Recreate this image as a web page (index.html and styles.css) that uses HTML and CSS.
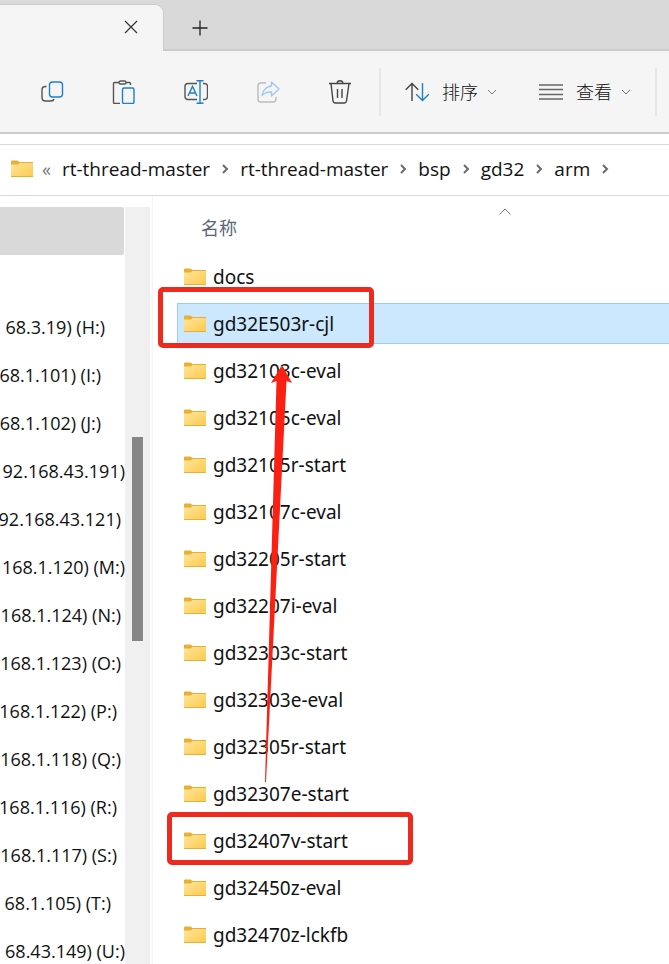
FILE: index.html
```
<!DOCTYPE html>
<html lang="zh-CN">
  <head>
    <meta charset="utf-8">
    <title>arm</title>
    <link rel="stylesheet" href="styles.css">
  </head>
  <body>
    <svg class="defs" width="0" height="0">
      <defs>
        <linearGradient id="fold" x1="0" y1="0" x2="1" y2="1">
          <stop offset="0" stop-color="#ffe59b"/>
          <stop offset="1" stop-color="#fcca4c"/>
        </linearGradient>
        <symbol id="folder" viewBox="0 0 22 18">
          <path d="M0 1.5Q0 .5 1 .5h5.5L8.5 2H22v6H0z" fill="#e8b030"/>
          <path d="M0 4.5h7L8.5 3H22v14H0z" fill="url(#fold)"/>
          <path d="M0 16.5h22" stroke="#e3b13f"/>
        </symbol>
        <symbol id="down" viewBox="0 0 10 6">
          <path d="M1 1l4 4 4-4" fill="none" stroke="#777"/>
        </symbol>
        <symbol id="next" viewBox="0 0 8 10">
          <path d="M2 1l4 4-4 4" fill="none" stroke="#6a6a6a" stroke-width="2"/>
        </symbol>
      </defs>
    </svg>

    <header class="titlebar">
      <div class="tab">
        <button class="icon-btn" aria-label="关闭">
          <svg width="14" height="14" viewBox="0 0 14 14"><path d="M1 1l12 12M13 1L1 13" stroke="#333" stroke-width="1.2"/></svg>
        </button>
      </div>
      <button class="icon-btn new-tab" aria-label="新标签页">
        <svg width="16" height="16" viewBox="0 0 16 16"><path d="M8 .5v15M.5 8h15" stroke="#222" stroke-width="1.3"/></svg>
      </button>
    </header>

    <div class="toolbar">
      <div class="tools">
        <button class="icon-btn" aria-label="复制">
          <svg width="24" height="24" viewBox="0 0 24 24" fill="none" stroke-width="1.4">
            <path d="M6.500 6.500h-1Q2 6.500 2 10v7.500q0 3.500 3.500 3.500H11q2.500 0 3-2" stroke="#555"/>
            <rect x="9.500" y="2" width="13" height="15" rx="3" stroke="#1f7fcc"/>
          </svg>
        </button>
        <button class="icon-btn" aria-label="粘贴">
          <svg width="24" height="24" viewBox="0 0 24 24" fill="none" stroke-width="1.4">
            <path d="M7 2.500H2.500q-1 0-1 1v19q0 1 1 1H8M14 2.500h3.500q1 0 1 1V5" stroke="#555"/>
            <rect x="7" y="1" width="7" height="3" rx="1.500" stroke="#555"/>
            <rect x="10.500" y="8" width="11.500" height="15.500" rx="1.500" stroke="#1f7fcc"/>
          </svg>
        </button>
        <button class="icon-btn" aria-label="重命名">
          <svg width="24" height="24" viewBox="0 0 24 24" fill="none" stroke-width="1.4">
            <path d="M13 3.500H4Q1 3.500 1 6.500v10q0 3 3 3h9M19 3.500h1q3.500 0 3.500 3v10q0 3-3.500 3h-1" stroke="#555"/>
            <path d="M4 16L8.500 6.500 13 16M5.500 13h6" stroke="#1f7fcc"/>
            <path d="M12.500.7h7M12.500 23.300h7M16 .7v22.600" stroke="#1f7fcc"/>
          </svg>
        </button>
        <button class="icon-btn" aria-label="共享" disabled>
          <svg width="24" height="24" viewBox="0 0 24 24" fill="none" stroke-width="1.4" stroke-linejoin="round">
            <path d="M10 3H5Q2 3 2 6v13q0 3 3 3h12q3 0 3-3v-2" stroke="#bbb"/>
            <path d="M15.500 2l7.500 7-7.500 7v-4q-6-.5-9.500 3.500Q7.500 7 15.500 6z" stroke="#a6c8ec"/>
          </svg>
        </button>
        <button class="icon-btn" aria-label="删除">
          <svg width="24" height="24" viewBox="0 0 24 24" fill="none" stroke="#444" stroke-width="1.4">
            <path d="M1 3.500h22M3 3.500l2 17.500q.3 2 2 2h9.500q1.700 0 2-2L21 3.500M9 3.500q.3-2.800 3-2.800t3 2.800M9.500 9v9M14 9v9"/>
          </svg>
        </button>
      </div>
      <div class="menus">
        <button class="menu-btn">
          <svg width="24" height="20" viewBox="0 0 24 20" fill="none" stroke-width="1.4">
            <path d="M7 19V1.500M.7 7.700L7 1.500l6.300 6.200" stroke="#444"/>
            <path d="M17.500 1v17.500M11.200 12.300l6.300 6.200 6.300-6.200" stroke="#1f7fcc"/>
          </svg>
          <span>排序</span>
          <svg width="10" height="6"><use href="#down"/></svg>
        </button>
        <button class="menu-btn view">
          <svg width="24" height="16" viewBox="0 0 24 16"><path d="M0 1h24M0 5.500h24M0 10.500h24M0 15h24" stroke="#666" stroke-width="1.3"/></svg>
          <span>查看</span>
          <svg width="10" height="6"><use href="#down"/></svg>
        </button>
      </div>
    </div>

    <nav class="address">
      <svg width="22" height="18"><use href="#folder"/></svg>
      <span class="more">«</span>
      <a href="#">rt-thread-master</a>
      <svg width="8" height="10"><use href="#next"/></svg>
      <a href="#">rt-thread-master</a>
      <svg width="8" height="10"><use href="#next"/></svg>
      <a href="#">bsp</a>
      <svg width="8" height="10"><use href="#next"/></svg>
      <a href="#">gd32</a>
      <svg width="8" height="10"><use href="#next"/></svg>
      <a href="#">arm</a>
      <svg width="8" height="10"><use href="#next"/></svg>
    </nav>

    <main class="panes">
      <ul class="drives">
        <li class="current"></li>
        <li></li>
        <li class="in5">68.3.19) (H:)</li>
        <li class="in6">68.1.101) (I:)</li>
        <li class="in6">68.1.102) (J:)</li>
        <li>92.168.43.191)</li>
        <li class="in1">92.168.43.121)</li>
        <li>168.1.120) (M:)</li>
        <li class="in1">168.1.124) (N:)</li>
        <li class="in1">168.1.123) (O:)</li>
        <li class="in2">168.1.122) (P:)</li>
        <li class="in1">168.1.118) (Q:)</li>
        <li class="in2">168.1.116) (R:)</li>
        <li class="in2">168.1.117) (S:)</li>
        <li class="in3">68.1.105) (T:)</li>
        <li>68.43.149) (U:)</li>
      </ul>
      <div class="scrollbar"><div class="thumb"></div></div>

      <section class="files">
        <div class="column">
          <span>名称</span>
          <svg class="sort" width="14" height="8" viewBox="0 0 14 8"><path d="M1.500 6.500L7 1l5.500 5.500" fill="none" stroke="#777"/></svg>
        </div>
        <ul class="list">
          <li><svg width="22" height="18"><use href="#folder"/></svg>docs</li>
          <li class="selected"><svg width="22" height="18"><use href="#folder"/></svg>gd32E503r-cjl<div class="mark mark-new"></div></li>
          <li><svg width="22" height="18"><use href="#folder"/></svg>gd32103c-eval</li>
          <li><svg width="22" height="18"><use href="#folder"/></svg>gd32105c-eval</li>
          <li><svg width="22" height="18"><use href="#folder"/></svg>gd32105r-start</li>
          <li><svg width="22" height="18"><use href="#folder"/></svg>gd32107c-eval</li>
          <li><svg width="22" height="18"><use href="#folder"/></svg>gd32205r-start</li>
          <li><svg width="22" height="18"><use href="#folder"/></svg>gd32207i-eval</li>
          <li><svg width="22" height="18"><use href="#folder"/></svg>gd32303c-start</li>
          <li><svg width="22" height="18"><use href="#folder"/></svg>gd32303e-eval</li>
          <li><svg width="22" height="18"><use href="#folder"/></svg>gd32305r-start</li>
          <li><svg width="22" height="18"><use href="#folder"/></svg>gd32307e-start</li>
          <li><svg width="22" height="18"><use href="#folder"/></svg>gd32407v-start<div class="mark mark-base"></div></li>
          <li><svg width="22" height="18"><use href="#folder"/></svg>gd32450z-eval</li>
          <li><svg width="22" height="18"><use href="#folder"/></svg>gd32470z-lckfb</li>
        </ul>
        <svg class="arrow" width="30" height="418" viewBox="0 0 30 418">
          <path d="M20 0L30 18 24.500 16 4 417H3L14.500 16 9 18z" fill="#fb2012"/>
        </svg>
      </section>
    </main>
  </body>
</html>
```
FILE: styles.css
```
* {
  box-sizing: border-box;
}

body {
  margin: 0;
  height: 100vh;
  display: flex;
  flex-direction: column;
  overflow: hidden;
  background: #fff;
  color: #111;
  font-family: "Open Sans", "Noto Sans CJK SC", sans-serif;
  font-size: 18px;
  line-height: 24px;
}

ul {
  list-style: none;
  margin: 0;
  padding: 0;
}

button {
  border: 0;
  padding: 0;
  background: none;
  font: inherit;
  color: inherit;
}

svg {
  display: block;
  flex: none;
}

.defs {
  position: absolute;
}

.icon-btn {
  display: flex;
  align-items: center;
  justify-content: center;
}

/* title bar */
.titlebar {
  display: flex;
  align-items: flex-end;
  flex: none;
  height: 51px;
  background: linear-gradient(#d9d9d9 49px, #cbcbcb 49px);
}

.tab {
  display: flex;
  align-items: center;
  justify-content: flex-end;
  width: 164px;
  height: 47px;
  padding-right: 25px;
  padding-bottom: 2px;
  background: #f5f5f5;
  border-top: 1px solid #cbcbcb;
  border-right: 1px solid #cbcbcb;
  border-top-right-radius: 9px;
}

.new-tab {
  width: 32px;
  height: 47px;
  margin-left: 20px;
}

/* toolbar */
.toolbar {
  display: flex;
  align-items: center;
  flex: none;
  height: 83px;
  background: #f5f5f5;
  border-bottom: 2px solid #cbcbcb;
}

.tools {
  display: flex;
  gap: 48px;
  padding-left: 40px;
  padding-right: 27px;
}

.menus {
  display: flex;
  align-items: center;
  height: 48px;
  padding: 0 24px;
  border-left: 2px solid #e6e6e6;
  border-right: 2px solid #e6e6e6;
}

.menu-btn {
  display: flex;
  align-items: center;
  gap: 12px;
}

.menu-btn span {
  width: 38px;
  font-weight: 300;
}

.menu-btn svg:last-child {
  margin-left: -4px;
}

.view {
  margin-left: 42px;
}

/* address bar */
.address {
  display: flex;
  align-items: center;
  flex: none;
  height: 52px;
  margin-top: 10px;
  padding-left: 11px;
  padding-bottom: 2px;
  border-top: 1px solid #d9d9d9;
  border-bottom: 1px solid #d9d9d9;
  font-size: 19px;
}

.address a {
  margin: 0 11px;
  color: #111;
  text-decoration: none;
}

.more {
  margin-left: 9px;
  color: #777;
  font-size: 18px;
}

/* panes */
.panes {
  display: flex;
  flex: 1;
  min-height: 0;
}

.drives {
  width: 125px;
  padding-top: 11px;
  overflow: hidden;
}

.drives li {
  display: flex;
  align-items: center;
  justify-content: flex-end;
  height: 48px;
  white-space: nowrap;
}

.drives .current {
  width: 124px;
  background: #d9d9d9;
  border-radius: 0 2px 2px 0;
}

.drives .in1 { padding-right: 4px; }
.drives .in2 { padding-right: 8px; }
.drives .in3 { padding-right: 14px; }
.drives .in5 { padding-right: 20px; }
.drives .in6 { padding-right: 24px; }

.scrollbar {
  flex: none;
  width: 25px;
  margin-top: 11px;
  padding: 230px 7px 0;
  background: #f0f0f0;
}

.thumb {
  height: 204px;
  background: #858585;
}

.files {
  position: relative;
  flex: 1;
  margin-left: 2px;
  padding-left: 24px;
  border-left: 1px solid #f5f5f5;
}

.column {
  height: 60px;
  padding: 20px 24px 0;
  color: #5a6678;
}

.sort {
  position: absolute;
  left: 345px;
  top: 12px;
}

.list {
  display: flex;
  flex-direction: column;
  gap: 6px;
  font-family: "Noto Sans", sans-serif;
  font-size: 19px;
}

.list li {
  position: relative;
  display: flex;
  align-items: center;
  gap: 7px;
  flex: none;
  height: 41px;
  padding-left: 6px;
  border: 1px solid transparent;
  border-right: 0;
}

.list .selected {
  background: #cce8ff;
  border-color: #99cfee;
}

/* red pen marks over the list */
.mark {
  position: absolute;
  border: 5px solid #ec2a1e;
  border-radius: 5px;
}

.mark-new {
  left: -20px;
  top: -17px;
  width: 216px;
  height: 61px;
}

.mark-base {
  left: -11px;
  top: -9px;
  width: 246px;
  height: 53px;
}

.arrow {
  position: absolute;
  left: 109px;
  top: 169px;
}
```
